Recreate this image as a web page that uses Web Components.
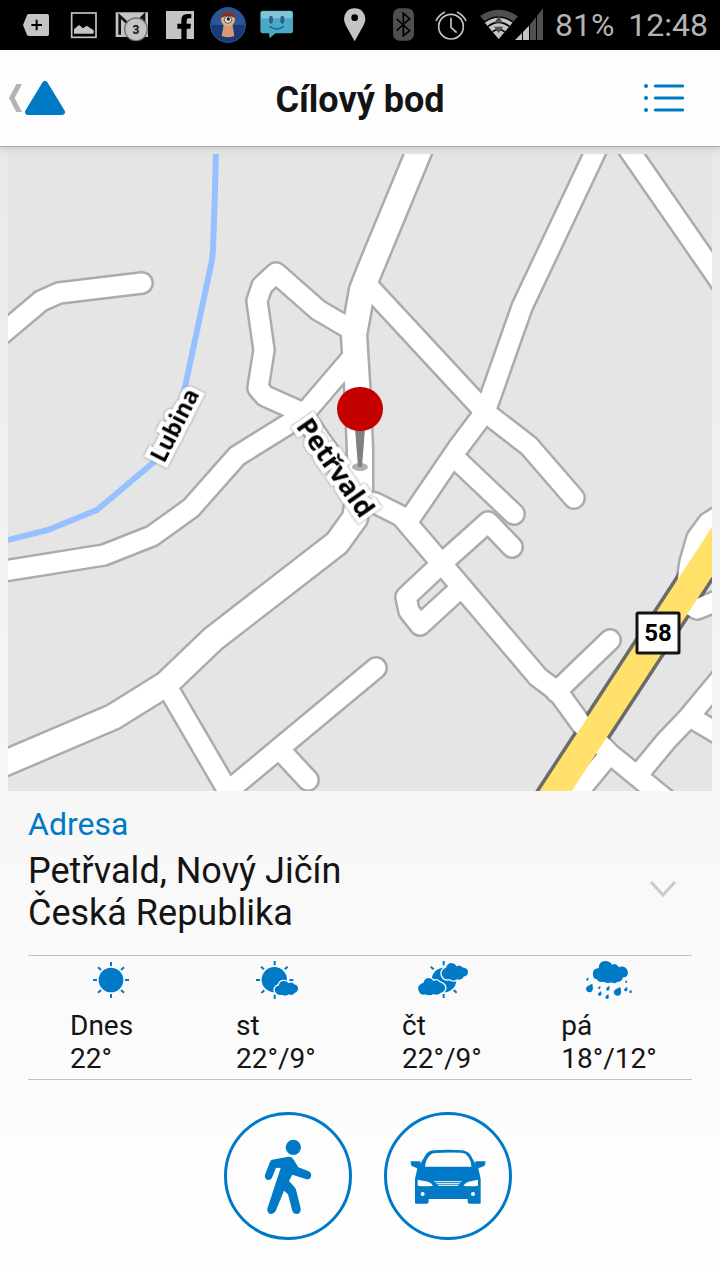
<!DOCTYPE html>
<html lang="cs">
<head>
<meta charset="utf-8">
<meta name="viewport" content="width=device-width, initial-scale=1">
<title>Cílový bod</title>
<style>
    :root{
        --blue: #007ac6;
        --ink: #141414;
        --line: #c0c0c0;
    }
    body{
        margin: 0;
        min-height: 100vh;
        font-family: Roboto, "Noto Sans", sans-serif;
        color: var(--ink);
        background: linear-gradient(#e6e6e6, #f7f7f7 62%, #ffffff);
    }
</style>
</head>
<body>
<target-screen></target-screen>

<template id="status-bar">
    <style>
        :host{
            display: flex;
            align-items: center;
            height: 50px;
            padding: 0 12px;
            background: #000;
            color: #b4b4b4;
            font-size: 32px;
        }
        svg{
            flex: none;
            width: 48px;
            height: 50px;
            fill: #c4c4c4;
        }
        svg.signal{
            width: 72px;
        }
        .system{
            display: flex;
            align-items: center;
            margin-left: auto;
        }
        .battery{
            margin: 0 14px 0 8px;
        }
        .count{
            font-size: 36px;
            font-weight: 700;
            fill: #111;
        }
    </style>
    <svg viewBox="36 0 144 150">
        <path d="M87 42H142Q147 42 147 47V103Q147 108 142 108H87Q83 108 81 105L69 75L81 46Q83 42 87 42Z"/>
        <path d="M94 75H126M110 59V91" stroke="#000" stroke-width="6"/>
    </svg>
    <svg viewBox="180 0 144 150">
        <rect x="215" y="39" width="73" height="73" fill="none" stroke="#c4c4c4" stroke-width="5"/>
        <path d="M222 101V88L237 75L249 85L260 77L281 91V101Z"/>
    </svg>
    <svg viewBox="324 0 144 150">
        <path d="M347 37H444V111H347Z"/>
        <path d="M359 104V48L396 82L432 46V100" fill="none" stroke="#111" stroke-width="8"/>
        <circle cx="408" cy="88" r="34" stroke="#6e6e6e" stroke-width="4"/>
        <text class="count" x="408" y="101" text-anchor="middle">3</text>
    </svg>
    <svg viewBox="468 0 144 150">
        <path d="M498 33H582V117H560V86H571L573 71H560V62Q560 55 567 55H574V42H562Q544 42 544 61V71H532V86H544V117H498Z"/>
    </svg>
    <svg viewBox="612 0 144 150">
        <circle cx="684" cy="75" r="53" fill="#173a78"/>
        <path d="M633 75A51 51 0 0 1 735 75Z" fill="#2d5591"/>
        <circle cx="684" cy="75" r="52" fill="none" stroke="#2e5590" stroke-width="3"/>
        <path d="M672 70H697L703 108Q684 116 665 108Z" fill="#d99872"/>
        <circle cx="684" cy="59" r="21" fill="#d8ae8c"/>
        <path d="M662 54Q662 37 684 37Q706 37 706 54Q684 42 662 54Z" fill="#8e2f17"/>
        <circle cx="684" cy="59" r="11" fill="#ddd" stroke="#222" stroke-width="2"/>
        <circle cx="685" cy="57" r="5" fill="#222"/>
    </svg>
    <svg viewBox="756 0 144 150">
        <path d="M788 32H872Q879 32 879 39V93Q879 100 872 100H826L809 115L807 100H788Q781 100 781 93V39Q781 32 788 32Z" fill="#4aa9c6"/>
        <path d="M788 34H872Q877 34 877 39V55H783V39Q783 34 788 34Z" fill="#84c3d3"/>
        <ellipse cx="813" cy="59" rx="6" ry="12" fill="#2c5f8d"/>
        <ellipse cx="847" cy="59" rx="6" ry="12" fill="#2c5f8d"/>
        <path d="M810 80Q830 94 850 80" fill="none" stroke="#1d6387" stroke-width="4" stroke-linecap="round"/>
    </svg>
    <div class="system">
        <svg viewBox="-21 0 144 150">
            <path fill-rule="evenodd" d="M50 25Q65 25 74 35Q82 44 82 57Q82 66 76 77L50 124L24 77Q18 66 18 57Q18 44 26 35Q35 25 50 25ZM50 43A10 10 0 1 0 50 63A10 10 0 1 0 50 43Z"/>
        </svg>
        <svg viewBox="123 0 144 150">
            <rect x="165" y="25" width="63" height="97" rx="20" fill="#4e4e4e"/>
            <path d="M176 57L215 92L196 107V40L215 56L176 92" fill="none" stroke="#000" stroke-width="5"/>
        </svg>
        <svg viewBox="267 0 144 150">
            <g fill="none" stroke="#c4c4c4" stroke-width="5">
                <circle cx="339" cy="80" r="37"/>
                <path d="M339 53V82L356 98M294 63Q303 44 321 36M384 63Q375 44 357 36"/>
            </g>
        </svg>
        <svg class="signal" viewBox="411 0 216 150">
            <path d="M424 49Q482 10 540 49L482 117Z" fill="#505050"/>
            <path d="M439 66Q482 35 525 66L482 117Z"/>
            <path d="M424 49L439 66Q482 36 525 66" fill="none" stroke="#000" stroke-width="5"/>
            <path d="M450 79Q482 55 514 79M464 95Q482 82 500 95" fill="none" stroke="#000" stroke-width="5"/>
            <path d="M482 47L494 68H470ZM468 80H496L482 99Z" fill="#505050"/>
            <path d="M531 120L552 99V120ZM555 96L573 77V120H555Z"/>
            <path d="M576 73L594 52V120H576ZM597 47L615 25V120H597Z" fill="#505050"/>
        </svg>
        <span class="battery">81%</span>
        <time>12:48</time>
    </div>
</template>

<template id="screen-header">
    <style>
        :host{
            display: grid;
            grid-template-columns: 1fr auto 1fr;
            align-items: center;
            height: 96px;
            padding: 0 34px 0 8px;
            background: #fdfdfd;
            border-bottom: 1px solid #a8a8a8;
            box-shadow: 0 2px 8px rgb(0 0 0 / 16%);
            position: relative;
        }
        h1{
            margin: 0 0 0 26px;
            padding-top: 4px;
            font-size: 36px;
            font-weight: 700;
        }
        button{
            display: flex;
            padding: 0;
            border: 0;
            background: none;
            cursor: pointer;
        }
        .menu{
            justify-self: end;
        }
    </style>
    <button class="back" aria-label="Zpět">
        <svg width="60" height="44" viewBox="24 228 180 132">
            <path d="M66 252H49L27 294L49 336H66L44 294Z" fill="#b4b4b4"/>
            <path d="M135 252L186 336H84Z" fill="#007ac6" stroke="#007ac6" stroke-width="18" stroke-linejoin="round"/>
        </svg>
    </button>
    <h1><slot></slot></h1>
    <button class="menu" aria-label="Nabídka">
        <svg width="44" height="48" viewBox="906 222 132 144">
            <path d="M946 258H1028M946 294H1028M946 330H1028" stroke="#007ac6" stroke-width="9" stroke-linecap="round"/>
            <g fill="#007ac6">
                <circle cx="918" cy="258" r="6"/>
                <circle cx="918" cy="294" r="6"/>
                <circle cx="918" cy="330" r="6"/>
            </g>
        </svg>
    </button>
</template>

<template id="street-map">
    <style>
        :host{
            display: block;
        }
        svg{
            display: block;
            width: 100%;
            height: auto;
            background: #e5e5e5;
        }
        path{
            fill: none;
        }
        .casing{
            stroke: #a9ada9;
        }
        .fill{
            stroke: #fff;
        }
        .street{
            stroke-linecap: round;
            stroke-linejoin: round;
        }
        .casing .minor{
            stroke-width: 24px;
        }
        .fill .minor{
            stroke-width: 19px;
        }
        .casing .major{
            stroke-width: 29px;
        }
        .fill .major{
            stroke-width: 24px;
        }
        .label{
            font-family: "Open Sans", "Noto Sans", sans-serif;
            font-weight: 700;
            fill: #000;
            stroke: #fff;
            stroke-width: 9px;
            paint-order: stroke;
            filter: drop-shadow(0 0 1px #777);
        }
        .number{
            font-size: 24px;
            font-weight: 700;
        }
    </style>
    <svg viewBox="8 154 704 637" role="img" aria-label="Mapa">
        <path d="M216 150L215 190L213 250L212 260L185 387L176 430L154 462L97 510L48 530L4 541" stroke="#96c0ff" stroke-width="6"/>
        <g class="casing street"></g>
        <path d="M536 821L732 521" stroke="#6b6b6b" stroke-width="34"/>
        <g class="fill street"></g>
        <path d="M536 821L732 521" stroke="#ffe16c" stroke-width="27"/>
        <text class="label" font-size="23" text-anchor="middle" transform="translate(182 429) rotate(-63)">Lubina</text>
        <text class="label" font-size="27" text-anchor="middle" transform="translate(328 473) rotate(55)">Petřvald</text>
        <rect x="637" y="613" width="42" height="40" rx="1" fill="#fff" stroke="#141414" stroke-width="3"/>
        <text class="number" x="658" y="641" text-anchor="middle">58</text>
        <ellipse cx="360" cy="467" rx="8" ry="4" fill="#b0b0b0"/>
        <path d="M355 428H365L362 467H358Z" style="fill: #808080"/>
        <rect x="337" y="387" width="46" height="44" rx="22" fill="#c40000"/>
    </svg>
</template>

<template id="address-card">
    <style>
        :host{
            display: grid;
            grid-template-columns: 1fr auto;
            align-items: end;
            padding: 14px 0 21px;
        }
        h2{
            grid-column: 1 / -1;
            margin: 0 0 7px;
            font-size: 32px;
            line-height: 38px;
            font-weight: 400;
            color: var(--blue);
        }
        address{
            font-size: 36px;
            line-height: 42px;
            font-style: normal;
        }
        button{
            display: flex;
            padding: 0 14px 30px;
            border: 0;
            background: none;
            cursor: pointer;
        }
    </style>
    <h2><slot name="title"></slot></h2>
    <address><slot></slot></address>
    <button aria-label="Zobrazit více">
        <svg width="30" height="30" viewBox="0 0 30 30">
            <path d="M3 8L15 21L27 8" fill="none" stroke="#cacaca" stroke-width="3"/>
        </svg>
    </button>
</template>

<template id="weather-day">
    <style>
        :host{
            display: flex;
            flex-direction: column;
            align-items: center;
            flex: 1;
            font-size: 28px;
            line-height: 33px;
        }
        svg{
            width: 60px;
            height: 48px;
            margin-bottom: 5px;
            fill: var(--blue);
        }
        .text{
            min-width: 82px;
        }
    </style>
    <svg></svg>
    <div class="text">
        <div><slot name="day"></slot></div>
        <div><slot></slot></div>
    </div>
</template>

<template id="travel-button">
    <style>
        :host{
            display: block;
        }
        button{
            display: block;
            width: 128px;
            height: 128px;
            padding: 0;
            border: 3px solid var(--blue);
            border-radius: 50%;
            background: #fdfdfd;
            cursor: pointer;
        }
        svg{
            display: block;
            width: 100%;
            fill: var(--blue);
        }
    </style>
    <button><svg></svg></button>
</template>

<template id="target-screen">
    <style>
        :host{
            display: block;
        }
        .map{
            padding: 7px 8px 0;
        }
        .details{
            padding: 0 28px;
        }
        .weather{
            display: flex;
            padding-bottom: 4px;
            border: solid var(--line);
            border-width: 1px 0;
        }
        .travel{
            display: flex;
            justify-content: center;
            gap: 32px;
            padding: 32px 0 40px 16px;
        }
    </style>
    <status-bar></status-bar>
    <screen-header>Cílový bod</screen-header>
    <div class="map"><street-map></street-map></div>
    <section class="details">
        <address-card>
            <span slot="title">Adresa</span>
            Petřvald, Nový Jičín<br>Česká Republika
        </address-card>
        <div class="weather">
            <weather-day icon="sun"><span slot="day">Dnes</span>22°</weather-day>
            <weather-day icon="partly"><span slot="day">st</span>22°/9°</weather-day>
            <weather-day icon="cloudy"><span slot="day">čt</span>22°/9°</weather-day>
            <weather-day icon="rain"><span slot="day">pá</span>18°/12°</weather-day>
        </div>
    </section>
    <nav class="travel">
        <travel-button icon="walk" label="Pěšky"></travel-button>
        <travel-button icon="car" label="Autem"></travel-button>
    </nav>
</template>

<script>
const icons = {
    sun: {
        box: "243 48 180 144",
        art: `
            <circle cx="333" cy="120" r="37"/>
            <path d="M333 66V78M333 162V174M279 120H291M375 120H387M294 82L303 90M372 82L363 90M294 158L303 150M372 158L363 150" stroke="#007ac6" stroke-width="6"/>`
    },
    partly: {
        box: "741 48 180 144",
        art: `
            <circle cx="823" cy="119" r="38"/>
            <path d="M824 63V76M824 164V177M768 120H780M868 120H880M783 80L792 88M863 80L854 88M784 159L793 151" stroke="#007ac6" stroke-width="6"/>
            <path d="M829 160Q819 150 829 139Q833 137 836 137Q839 123 850 123Q860 122 866 130Q877 124 883 133Q895 136 894 147Q892 157 885 158Q877 168 867 163Q856 170 846 164Q836 168 829 160Z" stroke="#fafafa" stroke-width="8" paint-order="stroke"/>`
    },
    cloudy: {
        box: "159 48 180 144",
        art: `
            <circle cx="252" cy="120" r="37"/>
            <path d="M251 63V76M251 162V174M212 80L221 88M281 150L290 158" stroke="#007ac6" stroke-width="6"/>
            <g stroke="#fafafa" stroke-width="8" paint-order="stroke">
                <path d="M177 155Q169 139 184 131Q188 129 190 129Q193 115 205 114Q215 114 220 123Q232 117 239 127Q258 133 255 147Q252 157 243 158Q232 168 221 162Q209 169 196 163Q183 168 177 155Z"/>
                <path d="M248 110Q240 97 251 87Q255 84 258 84Q261 70 273 69Q284 69 289 79Q300 73 307 82Q325 85 324 98Q321 109 312 109Q305 122 292 118Q280 125 268 117Q255 121 248 110Z"/>
            </g>`
    },
    rain: {
        box: "657 48 180 144",
        art: `
            <path d="M702 114Q695 101 702 90Q708 84 716 85Q716 64 736 63Q750 63 756 74Q768 68 777 82Q788 76 796 83Q806 90 803 104Q799 113 789 112Q785 127 773 125Q763 133 754 127Q742 132 731 125Q715 129 711 118Q705 118 702 114Z"/>
            <path d="M697 131Q703 157 688 157Q678 156 678 145Q679 138 697 131ZM781 141Q788 168 772 167Q762 166 761 156Q762 149 781 141ZM723 154Q728 167 718 168Q707 163 723 154ZM748 137Q751 152 742 152Q732 147 748 137ZM745 163Q750 177 740 177Q730 171 745 163ZM801 140Q805 154 796 154Q786 149 801 140ZM685 112V121Q679 124 678 118ZM721 137V146Q715 149 714 143ZM801 120V128Q795 130 795 125ZM814 149Q818 159 811 159Q803 155 814 149Z"/>`
    },
    walk: {
        box: "51 45 366 366",
        art: `
            <circle cx="250" cy="142" r="23"/>
            <path d="M186 179L235 170Q244 169 249 176L265 202L296 214Q306 219 303 230Q299 240 289 238L247 224L237 243L254 262Q258 267 259 273L272 325Q274 339 262 342Q251 343 247 333L234 283L222 272L197 333Q192 343 182 342Q171 339 172 326L212 204L198 203L186 233Q181 242 171 239Q163 235 165 224L180 186Q182 180 186 179Z"/>`
    },
    car: {
        box: "531 45 366 366",
        art: `
            <path fill-rule="evenodd" d="M615 309V237L622 205L607 199Q602 197 602 184H631V191L646 166Q653 153 671 151Q714 147 758 151Q775 154 782 166L796 191V184H826Q827 196 821 199L805 205L812 237V309Q812 311 808 311H778Q774 311 773 306V297H656V306Q655 311 650 311H619Q615 311 615 309ZM645 200H784Q784 178 767 162Q762 159 752 158Q714 156 677 159Q666 159 660 166Q647 178 645 200ZM623 239V257Q648 261 669 257Q666 249 654 245ZM804 239V257Q782 261 760 257Q764 249 775 245Z"/>
            <path d="M673 245H754M679 251H749M684 256H745" stroke="#fdfdfd" stroke-width="3"/>
            <circle cx="638" cy="282" r="6" fill="#fdfdfd"/>
            <circle cx="789" cy="282" r="6" fill="#fdfdfd"/>`
    }
};

const streets = {
    major: [
        "M422 144L369 272L362 290L354 335L358 400L360 450L360 490L355 518L337 543L213 639L166 684L113 717L-2 766"
    ],
    minor: [
        "M-4 339L41 301L59 293L142 283",
        "M352 330L318 310L276 273L262 286L257 301L264 350L258 388L265 396L303 413",
        "M-2 572L104 555L152 536L191 508L237 456L303 415L350 360",
        "M303 415L362 500L375 503L401 516L436 557L538 677L558 692L582 725L610 754L675 807",
        "M370 288L485 412L529 446L574 498",
        "M599 144L522 307L485 412L458 448L411 517",
        "M455 458L514 514",
        "M512 547L488 522L440 565L406 597L409 611L420 625L455 593",
        "M556 692L610 640",
        "M168 688L228 791L376 668",
        "M282 752L308 780",
        "M625 144L722 284",
        "M642 770L666 741L688 718L722 677",
        "M690 717L722 736",
        "M608 756L570 802",
        "M722 514L708 523L697 538L690 562L684 602L697 609L722 599"
    ]
};

// attach an open shadow root with a copy of the template named like the element
class BaseElement extends HTMLElement {
    constructor() {
        super();

        let template = document.getElementById(this.localName);
        this.attachShadow({ mode: 'open' });
        this.shadowRoot.appendChild(template.content.cloneNode(true));
    }

    drawIcon() {
        let icon = icons[this.getAttribute('icon')];
        let svg = this.shadowRoot.querySelector('svg');
        svg.setAttribute('viewBox', icon.box);
        svg.innerHTML = icon.art;
    }
}

class StatusBar extends BaseElement {}

class ScreenHeader extends BaseElement {}

class StreetMap extends BaseElement {
    connectedCallback() {
        let paths = '';
        for(let kind in streets){
            paths += streets[kind].map(d => `<path class="${kind}" d="${d}"></path>`).join('');
        }
        // all casings go below all fills so the crossings stay open
        this.shadowRoot.querySelector('.casing').innerHTML = paths;
        this.shadowRoot.querySelector('.fill').innerHTML = paths;
    }
}

class AddressCard extends BaseElement {}

class WeatherDay extends BaseElement {
    connectedCallback() {
        this.drawIcon();
    }
}

class TravelButton extends BaseElement {
    connectedCallback() {
        this.drawIcon();
        this.shadowRoot.querySelector('button').setAttribute('aria-label', this.getAttribute('label'));
    }
}

class TargetScreen extends BaseElement {}

window.customElements.define('status-bar', StatusBar);
window.customElements.define('screen-header', ScreenHeader);
window.customElements.define('street-map', StreetMap);
window.customElements.define('address-card', AddressCard);
window.customElements.define('weather-day', WeatherDay);
window.customElements.define('travel-button', TravelButton);
window.customElements.define('target-screen', TargetScreen);
</script>
</body>
</html>
